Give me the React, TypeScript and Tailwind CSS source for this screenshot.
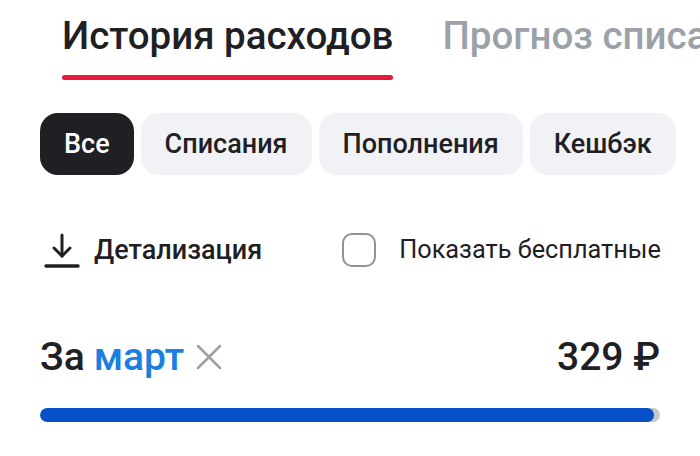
import { useState } from 'react'

const filters = ['Все', 'Списания', 'Пополнения', 'Кешбэк']

export default function App() {
  const [active, setActive] = useState('Все')
  const [showFree, setShowFree] = useState(false)

  return (
    <div className="w-[700px] h-[456px] overflow-hidden bg-white font-['Roboto',sans-serif] text-[#1f2023]">
      <div className="flex items-start gap-[49px] pl-[62px] pt-[14px] whitespace-nowrap">
        <div className="flex flex-col">
          <span className="text-[38.5px] leading-[44px] font-medium">История расходов</span>
          <div className="mt-[17px] h-[5px] rounded-full bg-[#e8173b]" />
        </div>
        <span className="text-[38.5px] leading-[44px] font-medium text-[#9ba1a8]">Прогноз списаний</span>
      </div>

      <div className="flex gap-[7px] pl-[40px] mt-[33px] whitespace-nowrap">
        {filters.map((f) => (
          <button
            key={f}
            onClick={() => setActive(f)}
            className={
              f === active
                ? 'h-[62px] px-[24px] rounded-[18px] bg-[#1f2023] text-white text-[27px] font-medium'
                : 'h-[62px] px-[24px] rounded-[18px] bg-[#f1f2f6] text-[#1f2023] text-[27px] font-medium'
            }
          >
            {f}
          </button>
        ))}
      </div>

      <div className="flex items-center pl-[44px] mt-[55px] whitespace-nowrap">
        <svg width="36" height="36" viewBox="0 0 36 36" fill="none" stroke="#1f2023" strokeWidth="3" strokeLinecap="round" strokeLinejoin="round">
          <path d="M18 3v21" />
          <path d="M10 16l8 8 8-8" />
          <path d="M2 34h32" strokeWidth="3.5" />
        </svg>
        <span className="ml-[14px] text-[27px] font-medium">Детализация</span>
        <button onClick={() => setShowFree(!showFree)} className="ml-[80px] flex items-center">
          <span className="w-[34px] h-[34px] rounded-[10px] border-2 border-[#8f9398]" />
          <span className="ml-[23px] text-[25.3px]">Показать бесплатные</span>
        </button>
      </div>

      <div className="flex items-center justify-between pl-[40px] pr-[40px] mt-[64px] whitespace-nowrap">
        <div className="flex items-center text-[39px] leading-[44px] font-medium">
          <span>За</span>
          <span className="ml-[9px] text-[#1a7fe0]">март</span>
          <svg className="ml-[12px]" width="26" height="26" viewBox="0 0 26 26" stroke="#9aa0a6" strokeWidth="2.5" strokeLinecap="round">
            <path d="M2 2l22 22M24 2L2 24" />
          </svg>
        </div>
        <span className="text-[39px] leading-[44px] font-medium">329 ₽</span>
      </div>

      <div className="mx-[40px] mt-[29px] h-[14px] rounded-full bg-[#c4c8cd] overflow-hidden">
        <div className="h-full rounded-full bg-[#0550c8]" style={{ width: '99%' }} />
      </div>
    </div>
  )
}
